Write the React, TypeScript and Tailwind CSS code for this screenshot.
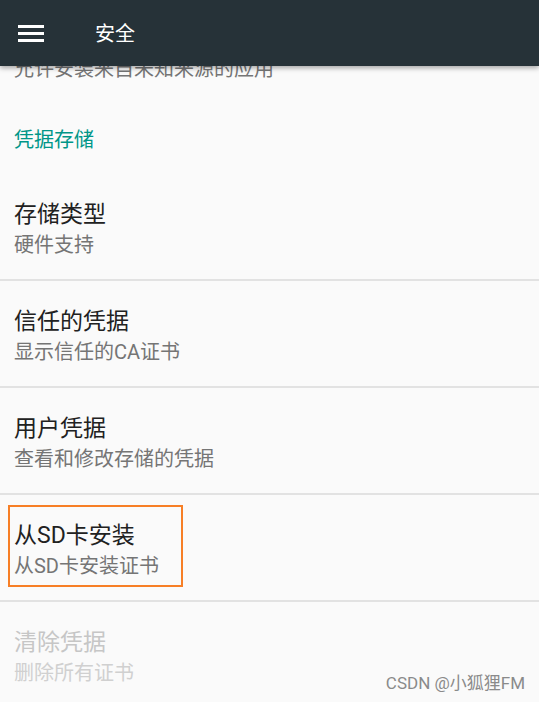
const items = [
  { title: "存储类型", summary: "硬件支持" },
  { title: "信任的凭据", summary: "显示信任的CA证书" },
  { title: "用户凭据", summary: "查看和修改存储的凭据" },
  { title: "从SD卡安装", summary: "从SD卡安装证书", marked: true },
  { title: "清除凭据", summary: "删除所有证书", disabled: true },
];

const font = { fontFamily: 'Roboto, "Noto Sans CJK SC", sans-serif' };

const App = () => {
  return (
    <div className="relative w-[539px] h-[702px] overflow-hidden bg-[#fafafa]" style={font}>
      <div className="absolute top-0 left-0 right-0 h-[66px] bg-[#263238] flex items-center shadow-[0_2px_5px_rgba(0,0,0,0.35)] z-10">
        <div className="w-[95px] pl-[18px] flex flex-col gap-[4px]">
          <div className="w-[26px] h-[3px] bg-white" />
          <div className="w-[26px] h-[3px] bg-white" />
          <div className="w-[26px] h-[3px] bg-white" />
        </div>
        <div className="text-white text-[20px] leading-none pt-[1px]">安全</div>
      </div>

      <div className="pt-[54px]">
        <div className="px-[14px] h-[30px] leading-[30px] text-[20px] text-[#757575] whitespace-nowrap">
          允许安装来自未知来源的应用
        </div>
        <div className="mt-[42px] px-[14px] h-[28px] leading-[28px] text-[20px] text-[#009688]">
          凭据存储
        </div>
        <div className="mt-[20px]">
          {items.map((item, i) => (
            <div key={item.title}>
              {i > 0 && <div className="h-[2px] bg-[#e2e2e2]" />}
              <div className="relative h-[105px] pt-[26px] px-[14px]">
                <div
                  className={
                    "h-[30px] leading-[30px] text-[23px] " +
                    (item.disabled ? "text-[#c6c6c6]" : "text-[#212121]")
                  }
                >
                  {item.title}
                </div>
                <div
                  className={
                    "h-[30px] leading-[30px] text-[20px] " +
                    (item.disabled ? "text-[#d0d0d0]" : "text-[#757575]")
                  }
                >
                  {item.summary}
                </div>
                {item.marked && (
                  <div className="absolute left-[8px] top-[10px] w-[175px] h-[82px] border-2 border-[#f77f26]" />
                )}
              </div>
            </div>
          ))}
        </div>
      </div>

      <div className="absolute right-[14px] bottom-[6px] text-[17px] text-[#8a8a8a]">CSDN @小狐狸FM</div>
    </div>
  );
};

export default App;
